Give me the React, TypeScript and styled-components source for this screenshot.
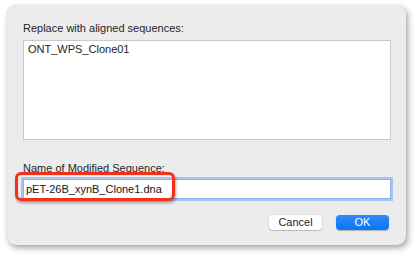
import { createGlobalStyle, styled } from 'styled-components';

const GlobalStyle = createGlobalStyle`
  html, body {
    margin: 0;
    padding: 0;
    background: #ffffff;
  }
  body {
    font-family: "Liberation Sans", Arial, sans-serif;
    -webkit-font-smoothing: antialiased;
  }
`;

const Page = styled.div`
  width: 418px;
  height: 257px;
  padding: 5px 0 0 7px;
  box-sizing: border-box;
`;

const Dialog = styled.div`
  width: 399px;
  height: 240px;
  box-sizing: border-box;
  background: #ececec;
  border-radius: 9px;
  box-shadow: 2px 3px 6px rgba(0, 0, 0, 0.35), 0 0 1px rgba(0, 0, 0, 0.2);
  padding: 15px 15px 15px 16px;
  display: flex;
  flex-direction: column;
`;

const Label = styled.div`
  font-size: 11px;
  line-height: 16px;
  color: #262626;
  height: 16px;
`;

const ListBox = styled.div`
  margin-top: 4px;
  height: 101px;
  box-sizing: border-box;
  background: #ffffff;
  border: 1px solid #c9c9c9;
  padding: 1px 4px;
`;

const ListItem = styled.div`
  font-size: 11px;
  line-height: 14px;
  color: #1e1e1e;
`;

const SecondLabel = styled(Label)`
  margin-top: 20px;
`;

const InputWrap = styled.div`
  position: relative;
  margin-top: 3px;
  margin-right: -1px;
  margin-left: -1px;
`;

const TextInput = styled.div`
  height: 20px;
  box-sizing: border-box;
  background: #ffffff;
  border: 1px solid #8db2ee;
  box-shadow: 0 0 0 2px #a6c5f5;
  margin: 0 1px;
  padding: 0 2px;
  font-size: 11px;
  line-height: 18px;
  color: #161616;
  display: flex;
  align-items: center;
`;

// red annotation drawn over the field
const Highlight = styled.div`
  position: absolute;
  left: -7px;
  top: -7px;
  width: 160px;
  height: 29px;
  box-sizing: border-box;
  border: 3px solid #f0321d;
  border-radius: 6px;
  box-shadow: 1px 2px 3px rgba(0, 0, 0, 0.35), inset 0 0 1px rgba(0, 0, 0, 0.2);
  pointer-events: none;
`;

const ButtonRow = styled.div`
  margin-top: 16px;
  display: flex;
  justify-content: flex-end;
  gap: 14px;
  padding-right: 2px;
`;

const Button = styled.div<{ $primary?: boolean }>`
  width: 53px;
  height: 15px;
  border-radius: 4px;
  font-size: 11px;
  line-height: 15px;
  text-align: center;
  color: ${(p) => (p.$primary ? '#ffffff' : '#1f1f1f')};
  background: ${(p) => (p.$primary ? 'linear-gradient(#2a8cff, #0a74f5)' : '#ffffff')};
  box-shadow: ${(p) =>
    p.$primary
      ? '0 0.5px 1px rgba(0, 0, 0, 0.25)'
      : '0 0 0 0.5px rgba(0, 0, 0, 0.12), 0 1px 1px rgba(0, 0, 0, 0.15)'};
`;

export default function App() {
  return (
    <>
      <GlobalStyle />
      <Page>
        <Dialog>
          <Label>Replace with aligned sequences:</Label>
          <ListBox>
            <ListItem>ONT_WPS_Clone01</ListItem>
          </ListBox>
          <SecondLabel>Name of Modified Sequence:</SecondLabel>
          <InputWrap>
            <TextInput>pET-26B_xynB_Clone1.dna</TextInput>
            <Highlight />
          </InputWrap>
          <ButtonRow>
            <Button>Cancel</Button>
            <Button $primary>OK</Button>
          </ButtonRow>
        </Dialog>
      </Page>
    </>
  );
}
